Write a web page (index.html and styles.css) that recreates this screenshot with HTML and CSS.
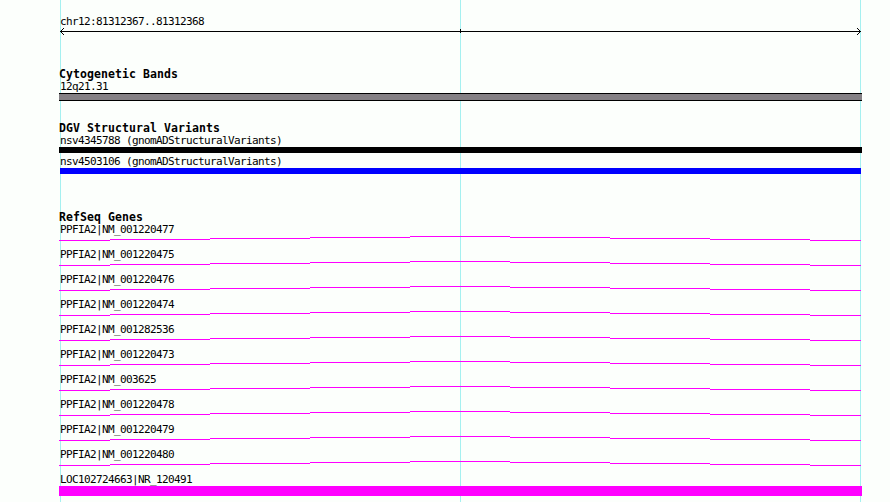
FILE: index.html
```html
<!DOCTYPE html>
<html lang="en">
<head>
    <meta charset="UTF-8">
    <title>chr12:81312367..81312368</title>
    <link rel="stylesheet" href="styles.css">
</head>
<body>
    <!-- stepped intron line shared by the gene rows -->
    <svg class="defs" width="0" height="0">
        <symbol id="intron" viewBox="0 0 802 5">
            <path d="M0 4h51v1H0zM51 3h100v1H51zM151 2h100v1H151zM251 1h100v1H251zM351 0h100v1H351zM451 1h100v1H451zM551 2h100v1H551zM651 3h100v1H651zM751 4h51v1H751z"/>
        </symbol>
    </svg>

    <div class="browser">
        <div class="ruler">
            <div class="label">chr12:81312367..81312368</div>
            <svg class="axis" width="803" height="7" shape-rendering="crispEdges">
                <path d="M1 3h801v1H1zM401 1h1v4h-1z"/>
                <path d="M2 2h1v3h-1zM3 1h1v1h-1zM3 5h1v1h-1zM4 0h1v1h-1zM4 6h1v1h-1z"/>
                <path d="M800 2h1v3h-1zM799 1h1v1h-1zM799 5h1v1h-1zM798 0h1v1h-1zM798 6h1v1h-1z"/>
            </svg>
        </div>

        <div class="track bands">
            <h2>Cytogenetic Bands</h2>
            <div class="label">12q21.31</div>
            <div class="bar band"></div>
        </div>

        <div class="track variants">
            <h2>DGV Structural Variants</h2>
            <div class="label">nsv4345788 (gnomADStructuralVariants)</div>
            <div class="bar variant"></div>
            <div class="label">nsv4503106 (gnomADStructuralVariants)</div>
            <div class="bar variant gain"></div>
        </div>

        <div class="track genes">
            <h2>RefSeq Genes</h2>
            <div class="gene"><div class="label">PPFIA2|NM_001220477</div><svg class="intron"><use href="#intron"/></svg></div>
            <div class="gene"><div class="label">PPFIA2|NM_001220475</div><svg class="intron"><use href="#intron"/></svg></div>
            <div class="gene"><div class="label">PPFIA2|NM_001220476</div><svg class="intron"><use href="#intron"/></svg></div>
            <div class="gene"><div class="label">PPFIA2|NM_001220474</div><svg class="intron"><use href="#intron"/></svg></div>
            <div class="gene"><div class="label">PPFIA2|NM_001282536</div><svg class="intron"><use href="#intron"/></svg></div>
            <div class="gene"><div class="label">PPFIA2|NM_001220473</div><svg class="intron"><use href="#intron"/></svg></div>
            <div class="gene"><div class="label">PPFIA2|NM_003625</div><svg class="intron"><use href="#intron"/></svg></div>
            <div class="gene"><div class="label">PPFIA2|NM_001220478</div><svg class="intron"><use href="#intron"/></svg></div>
            <div class="gene"><div class="label">PPFIA2|NM_001220479</div><svg class="intron"><use href="#intron"/></svg></div>
            <div class="gene"><div class="label">PPFIA2|NM_001220480</div><svg class="intron"><use href="#intron"/></svg></div>
            <div class="gene"><div class="label">LOC102724663|NR_120491</div><div class="bar exon"></div></div>
        </div>
    </div>
</body>
</html>
```

FILE: styles.css
```css
body {
    margin: 0;
    background-color: #fcfffc;
    color: #000;
    font-family: "DejaVu Sans Mono", monospace;
    font-size: 11px;
    line-height: 13px;
    overflow: hidden;
}

.defs {
    display: block;
}

/* the three vertical guides are drawn behind the tracks */
.browser {
    box-sizing: border-box;
    width: 890px;
    height: 502px;
    padding: 15px 28px 0 59px;
    background-image: linear-gradient(#a5f0f0, #a5f0f0), linear-gradient(#a5f0f0, #a5f0f0), linear-gradient(#a5f0f0, #a5f0f0);
    background-size: 1px 100%;
    background-position: 60px 0, 460px 0, 860px 0;
    background-repeat: no-repeat;
}

h2 {
    margin: 0;
    height: 12px;
    font-size: 11.5px;
    font-weight: bold;
    letter-spacing: 0.08px;
    white-space: nowrap;
}

/* labels stay above the bars so underscores are not cut off */
.label {
    position: relative;
    z-index: 1;
    height: 13px;
    padding-left: 1px;
    letter-spacing: -0.62px;
    white-space: nowrap;
}

.axis {
    display: block;
}

.bands {
    margin-top: 33px;
}

.variants {
    margin-top: 21px;
}

.genes {
    margin-top: 37px;
}

.band {
    box-sizing: border-box;
    height: 8px;
    background-color: #848084;
    border-top: 1px solid #000;
    border-bottom: 1px solid #000;
}

.variant {
    height: 6px;
    margin-bottom: 2px;
    background-color: #000;
}

.gain {
    margin: 0 1px;
    background-color: #00f;
}

.gene {
    height: 25px;
}

.intron {
    display: block;
    width: 802px;
    height: 5px;
    fill: #f0f;
    shape-rendering: crispEdges;
}

.exon {
    height: 10px;
    background-color: #f0f;
}
```
